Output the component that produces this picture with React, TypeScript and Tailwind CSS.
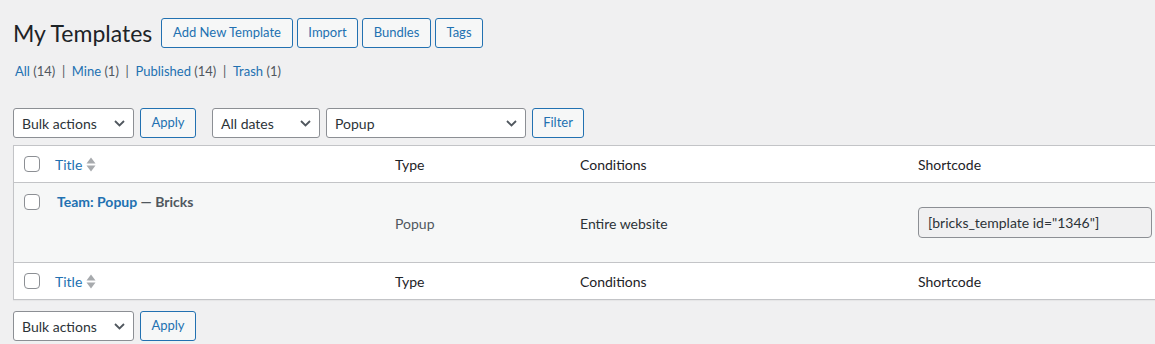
import { ReactNode } from 'react';

const font = 'font-["Lato","Open_Sans",sans-serif]';

function Chevron() {
  return (
    <svg width="11" height="7" viewBox="0 0 11 7" className="shrink-0">
      <path d="M1 1l4.5 4.5L10 1" fill="none" stroke="#50575e" strokeWidth="1.8" />
    </svg>
  );
}

function Select({ label, width }: { label: string; width: string }) {
  return (
    <div className={`${width} h-[30px] flex items-center justify-between bg-white border border-[#8c8f94] rounded-[3px] pl-[8px] pr-[8px] text-[14px] text-[#2c3338]`}>
      <span>{label}</span>
      <Chevron />
    </div>
  );
}

function Button({ children, className = '' }: { children: ReactNode; className?: string }) {
  return (
    <div className={`h-[30px] flex items-center justify-center bg-[#f6f7f7] border border-[#2271b1] rounded-[3px] text-[13px] text-[#2271b1] ${className}`}>
      {children}
    </div>
  );
}

function Checkbox() {
  return <div className="w-[16px] h-[16px] bg-white border border-[#8c8f94] rounded-[4px]" />;
}

function SortIcon() {
  return (
    <svg width="10" height="15" viewBox="0 0 10 15" className="ml-[4px]">
      <path d="M0.5 6.5L5 0.5 9.5 6.5z" fill="#a7aaad" />
      <path d="M0.5 8.5L5 14.5 9.5 8.5z" fill="#a7aaad" />
    </svg>
  );
}

const cols = 'grid grid-cols-[31px_340px_185px_338px_1fr]';

function HeadRow({ border }: { border: string }) {
  return (
    <div className={`${cols} h-[37px] bg-white ${border} border-[#c3c4c7] text-[14px] text-[#1d2327]`}>
      <div className="flex items-center pl-[10px]">
        <Checkbox />
      </div>
      <div className="flex items-center pl-[10px] text-[#2271b1]">
        Title
        <SortIcon />
      </div>
      <div className="flex items-center pl-[10px]">Type</div>
      <div className="flex items-center pl-[10px]">Conditions</div>
      <div className="flex items-center pl-[10px]">Shortcode</div>
    </div>
  );
}

export default function App() {
  return (
    <div className={`w-[1155px] h-[344px] overflow-hidden bg-[#f0f0f1] ${font} pl-[13px] pt-[18px]`}>
      {/* Heading */}
      <div className="flex items-center h-[30px]">
        <h1 className="w-[148px] text-[23px] text-[#1d2327] leading-none">My Templates</h1>
        <div className="flex gap-[4px]">
          <Button className="w-[132px]">Add New Template</Button>
          <Button className="w-[61px]">Import</Button>
          <Button className="w-[69px]">Bundles</Button>
          <Button className="w-[48px]">Tags</Button>
        </div>
      </div>

      {/* Status links */}
      <div className="mt-[14px] h-[20px] flex items-center pl-[2px] text-[13px] text-[#50575e] whitespace-pre">
        <span className="text-[#2271b1]">All</span> (14)  |  <span className="text-[#2271b1]">Mine</span> (1)  |  <span className="text-[#2271b1]">Published</span> (14)  |  <span className="text-[#2271b1]">Trash</span> (1)
      </div>

      {/* Top tablenav */}
      <div className="mt-[26px] flex items-center">
        <Select label="Bulk actions" width="w-[121px]" />
        <Button className="w-[56px] ml-[6px]">Apply</Button>
        <div className="ml-[16px]">
          <Select label="All dates" width="w-[108px]" />
        </div>
        <div className="ml-[6px]">
          <Select label="Popup" width="w-[200px]" />
        </div>
        <Button className="w-[52px] ml-[6px]">Filter</Button>
      </div>

      {/* Table */}
      <div className="mt-[7px] w-[1160px] border border-[#c3c4c7] shadow-[0_1px_1px_rgba(0,0,0,0.04)]">
        <HeadRow border="border-b" />
        <div className={`${cols} h-[79px] bg-[#f6f7f7] text-[14px]`}>
          <div className="pl-[10px] pt-[11px]">
            <Checkbox />
          </div>
          <div className="pl-[12px] pt-[8px] font-bold text-[14px] text-[#50575e]">
            <span className="text-[#2271b1]">Team: Popup</span> — Bricks
          </div>
          <div className="flex items-center pl-[10px] pt-[2px] text-[#50575e]">Popup</div>
          <div className="flex items-center pl-[10px] pt-[2px] text-[#2c3338]">Entire website</div>
          <div className="flex items-center pl-[10px]">
            <div className="w-[234px] h-[31px] flex items-center px-[9px] bg-[#f0f0f1] border border-[#8c8f94] rounded-[4px] text-[14px] text-[#2c3338]">
              [bricks_template id="1346"]
            </div>
          </div>
        </div>
        <HeadRow border="border-t" />
      </div>

      {/* Bottom tablenav */}
      <div className="mt-[11px] flex items-center">
        <Select label="Bulk actions" width="w-[121px]" />
        <Button className="w-[56px] ml-[6px]">Apply</Button>
      </div>
    </div>
  );
}
